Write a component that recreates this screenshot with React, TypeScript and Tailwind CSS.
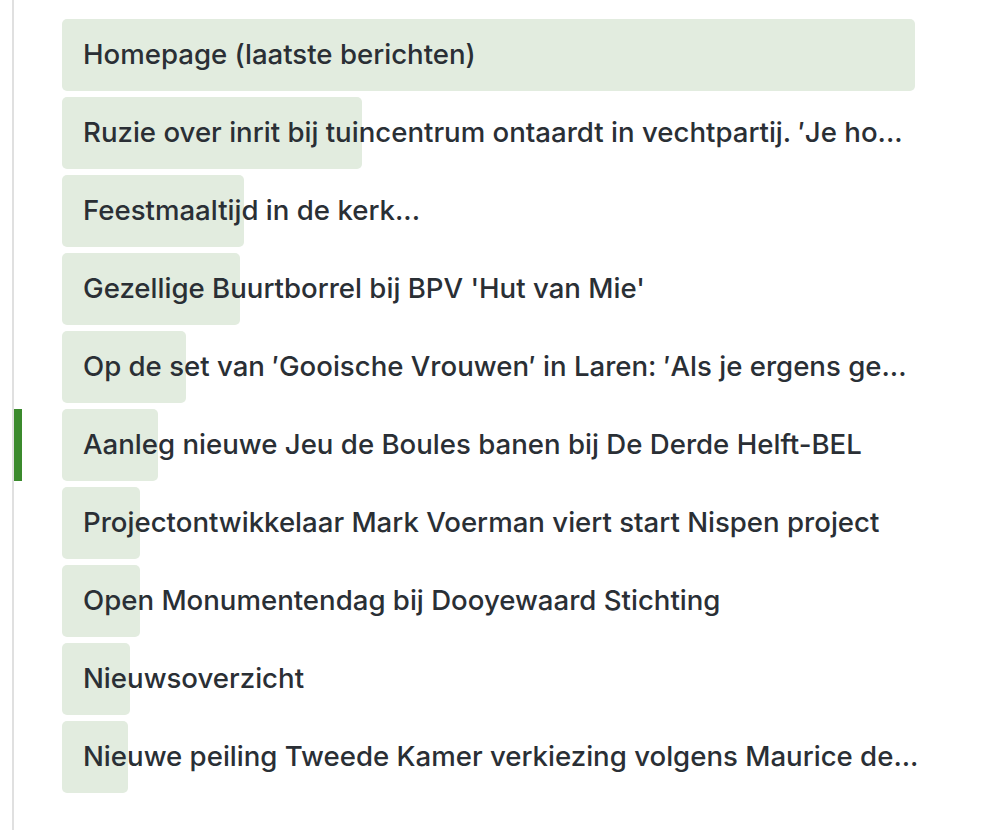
import React from 'react';

type Item = {
  title: string;
  fill: number; // width of the light green bar in px
};

const items: Item[] = [
  { title: 'Homepage (laatste berichten)', fill: 853 },
  { title: "Ruzie over inrit bij tuincentrum ontaardt in vechtpartij. ′Je ho...", fill: 300 },
  { title: 'Feestmaaltijd in de kerk...', fill: 182 },
  { title: "Gezellige Buurtborrel bij BPV 'Hut van Mie'", fill: 178 },
  { title: "Op de set van ′Gooische Vrouwen′ in Laren: ′Als je ergens ge...", fill: 124 },
  { title: 'Aanleg nieuwe Jeu de Boules banen bij De Derde Helft-BEL', fill: 96 },
  { title: 'Projectontwikkelaar Mark Voerman viert start Nispen project', fill: 78 },
  { title: 'Open Monumentendag bij Dooyewaard Stichting', fill: 78 },
  { title: 'Nieuwsoverzicht', fill: 68 },
  { title: 'Nieuwe peiling Tweede Kamer verkiezing volgens Maurice de...', fill: 66 },
];

const activeIndex = 5;

const App = () => {
  return (
    <div
      className="min-h-screen bg-white"
      style={{ fontFamily: 'Inter, "Noto Sans", sans-serif' }}
    >
      <div className="ml-3 min-h-screen border-l-2 border-[#e0e0e0] pt-[19px]">
        <ul className="flex flex-col gap-[6px]">
          {items.map((item, i) => (
            <li key={item.title} className="flex h-[72px]">
              {/* active marker */}
              <div className={`w-2 shrink-0 ${i === activeIndex ? 'bg-[#3b8a2d]' : ''}`} />
              <div className="relative ml-10 flex w-[853px] items-center">
                <div
                  className="absolute inset-y-0 left-0 rounded-[5px] bg-[#e2ecdf]"
                  style={{ width: item.fill }}
                />
                <span className="relative whitespace-nowrap pl-[21px] text-[27.6px] font-medium leading-none text-[#2a2f35]">
                  {item.title}
                </span>
              </div>
            </li>
          ))}
        </ul>
      </div>
    </div>
  );
};

export default App;
